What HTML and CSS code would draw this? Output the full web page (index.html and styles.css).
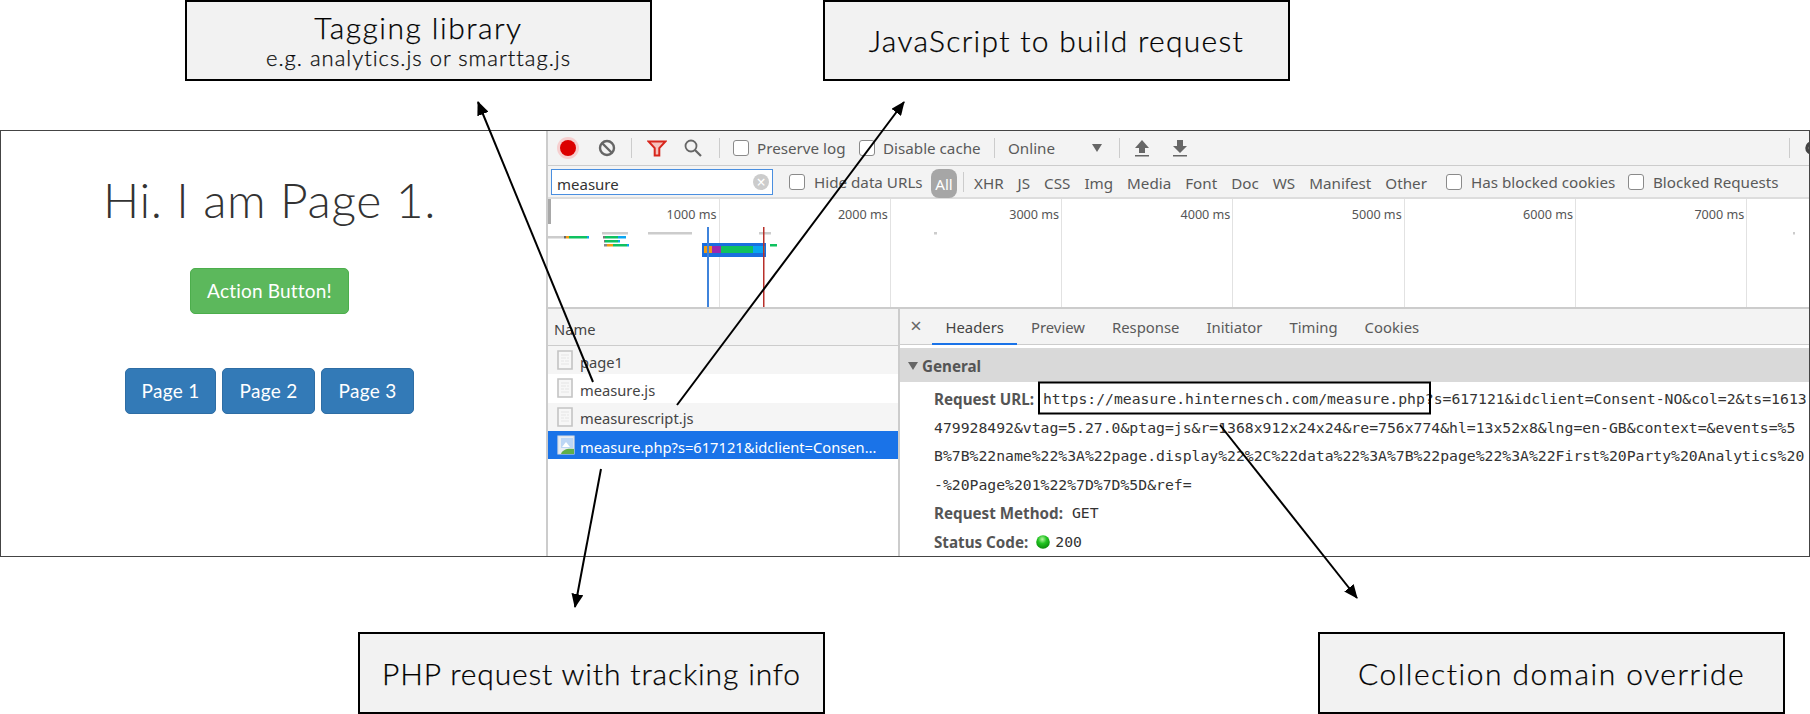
FILE: index.html
```html
<!DOCTYPE html>
<html lang="en">
<head>
<meta charset="utf-8">
<title>Network request diagram</title>
<link rel="stylesheet" href="styles.css">
</head>
<body>
<svg width="0" height="0" class="defs">
  <defs>
    <symbol id="doc" viewBox="0 0 16 20">
      <path d="M1 1h14v18H1z" fill="#f7f7f7" stroke="#c4c4c4" stroke-width="1.6"/>
      <path d="M4 5h8M4 8h5M10 8h2M4 11h3M8 11h4M4 14h8" stroke="#e6e6e6" stroke-width="1.2"/>
    </symbol>
    <marker id="head" markerUnits="userSpaceOnUse" markerWidth="14" markerHeight="12" refX="13" refY="6" orient="auto">
      <path d="M0 0L14 6L0 12Z" fill="#000"/>
    </marker>
    <radialGradient id="led" cx="45%" cy="30%" r="70%">
      <stop offset="0" stop-color="#b6f5a0"/>
      <stop offset=".45" stop-color="#22c422"/>
      <stop offset="1" stop-color="#0a8a0a"/>
    </radialGradient>
  </defs>
</svg>

<section class="labels labels-top">
  <div class="label">
    <div class="label-title">Tagging library</div>
    <div class="label-sub">e.g. analytics.js or smarttag.js</div>
  </div>
  <div class="label"><div class="label-title label-mid">JavaScript to build request</div></div>
</section>

<main class="frame">
  <section class="page">
    <h1 class="page-title">Hi. I am Page 1.</h1>
    <button class="btn btn-green">Action Button!</button>
    <nav class="page-nav">
      <button class="btn btn-blue">Page 1</button>
      <button class="btn btn-blue">Page 2</button>
      <button class="btn btn-blue">Page 3</button>
    </nav>
  </section>

  <section class="devtools">
    <div class="bar bar-main">
      <svg class="ic ic-record" width="24" height="24" viewBox="0 0 24 24"><circle cx="12" cy="12" r="11" fill="#f6cfcf"/><circle cx="12" cy="12" r="8" fill="#dc0000"/></svg>
      <svg class="ic ic-stop" width="18" height="18" viewBox="0 0 18 18"><circle cx="9" cy="9" r="7" fill="none" stroke="#666" stroke-width="2.4"/><path d="M4 4l10 10" stroke="#666" stroke-width="2.4"/></svg>
      <span class="sep sep-a"></span>
      <svg class="ic ic-filter" width="20" height="17" viewBox="0 0 20 17"><path d="M1.500 1.500h17l-6.200 6.600v7.400h-4.600v-7.400z" fill="#f5c2bd" stroke="#d8261c" stroke-width="2"/></svg>
      <svg class="ic ic-search" width="20" height="20" viewBox="0 0 20 20"><circle cx="8" cy="8" r="5.500" fill="none" stroke="#666" stroke-width="1.800"/><path d="M12 12l6 6" stroke="#666" stroke-width="2.200"/></svg>
      <span class="sep sep-b"></span>
      <span class="check check-a"></span><span class="txt txt-preserve">Preserve log</span>
      <span class="check check-b"></span><span class="txt txt-disable">Disable cache</span>
      <span class="sep sep-c"></span>
      <span class="txt txt-online">Online</span>
      <svg class="ic ic-caret" width="10" height="8" viewBox="0 0 10 8"><path d="M0 0h10L5 8z" fill="#666"/></svg>
      <span class="sep sep-d"></span>
      <svg class="ic ic-up" width="16" height="18" viewBox="0 0 16 18"><path d="M8 1l7 8h-4v5H5V9H1zM1 16h14v1.500H1z" fill="#666"/></svg>
      <svg class="ic ic-down" width="16" height="18" viewBox="0 0 16 18"><path d="M5 1h6v6h4l-7 7-7-7h4zM1 16h14v1.500H1z" fill="#666"/></svg>
      <span class="sep sep-e"></span>
      <svg class="ic ic-gear" width="14" height="16" viewBox="0 0 14 16"><circle cx="7" cy="8" r="5" fill="none" stroke="#444" stroke-width="3.500"/></svg>
    </div>

    <div class="bar bar-filter">
      <div class="search">
        <span class="search-text">measure</span>
        <span class="search-clear">×</span>
      </div>
      <span class="check check-c"></span><span class="txt txt-hide">Hide data URLs</span>
      <span class="pill">All</span>
      <span class="sep sep-f"></span>
      <div class="types">
        <span>XHR</span><span>JS</span><span>CSS</span><span>Img</span><span>Media</span><span>Font</span><span>Doc</span><span>WS</span><span>Manifest</span><span>Other</span>
      </div>
      <span class="check check-d"></span><span class="txt txt-cookies">Has blocked cookies</span>
      <span class="check check-e"></span><span class="txt">Blocked Requests</span>
    </div>

    <div class="overview">
      <div class="tick tick-first">1000 ms</div>
      <div class="tick">2000 ms</div>
      <div class="tick">3000 ms</div>
      <div class="tick">4000 ms</div>
      <div class="tick">5000 ms</div>
      <div class="tick">6000 ms</div>
      <div class="tick">7000 ms</div>
      <svg class="overview-bars" width="1261" height="108" viewBox="548 199 1261 108">
        <rect x="548" y="199" width="3" height="25" fill="#a8a8a8"/>
        <rect x="548" y="236" width="16" height="2.500" fill="#ccc"/>
        <rect x="564" y="236" width="2" height="2.500" fill="#666"/>
        <rect x="566" y="236" width="3" height="2.500" fill="#f39c12"/>
        <rect x="569" y="236" width="18" height="2.500" fill="#0fc15f"/>
        <rect x="587" y="236" width="2" height="2.500" fill="#0aa5f0"/>
        <rect x="602" y="232" width="26" height="2.500" fill="#ccc"/>
        <rect x="603" y="236" width="2" height="2.500" fill="#777"/>
        <rect x="605" y="236" width="13" height="2.500" fill="#0fc15f"/>
        <rect x="618" y="236" width="8" height="2.500" fill="#0aa5f0"/>
        <rect x="604" y="240" width="1" height="2.500" fill="#777"/>
        <rect x="605" y="240" width="13" height="2.500" fill="#0fc15f"/>
        <rect x="618" y="240" width="2" height="2.500" fill="#0aa5f0"/>
        <rect x="604" y="244" width="3" height="2.500" fill="#888"/>
        <rect x="607" y="244" width="6" height="2.500" fill="#f39c12"/>
        <rect x="613" y="244" width="14" height="2.500" fill="#0fc15f"/>
        <rect x="627" y="244" width="2" height="2.500" fill="#0aa5f0"/>
        <rect x="648" y="232" width="44" height="2.500" fill="#ccc"/>
        <rect x="759" y="232" width="12" height="2.500" fill="#ccc"/>
        <rect x="934" y="232" width="3" height="2.500" fill="#ccc"/>
        <rect x="1793" y="232" width="2" height="2.500" fill="#ccc"/>
        <rect x="770" y="244" width="7" height="2.500" fill="#0fc15f"/>
        <rect x="702" y="243" width="64" height="14" fill="#1a6fdf"/>
        <rect x="704" y="246" width="3" height="7" fill="#f39c12"/>
        <rect x="707" y="246" width="2" height="7" fill="#6b7d99"/>
        <rect x="709" y="246" width="3" height="7" fill="#f39c12"/>
        <rect x="712" y="246" width="9" height="7" fill="#9c27b0"/>
        <rect x="721" y="246" width="32" height="7" fill="#0fc15f"/>
        <rect x="753" y="246" width="12" height="7" fill="#0aa5f0"/>
        <rect x="707" y="227" width="2" height="80" fill="#3f83db"/>
        <rect x="763" y="227" width="1.500" height="80" fill="#b8302a"/>
      </svg>
    </div>

    <div class="split">
      <div class="names">
        <div class="names-head">Name</div>
        <div class="row row-alt"><svg class="file" width="16" height="20"><use href="#doc"/></svg><span class="row-name">page1</span></div>
        <div class="row"><svg class="file" width="16" height="20"><use href="#doc"/></svg><span class="row-name">measure.js</span></div>
        <div class="row row-alt"><svg class="file" width="16" height="20"><use href="#doc"/></svg><span class="row-name">measurescript.js</span></div>
        <div class="row row-sel">
          <svg class="file" width="18" height="20" viewBox="0 0 18 20"><path d="M1 1h16v18H1z" fill="#e8edf3" stroke="#d8dde3" stroke-width="1.200"/><path d="M4 3h12v10H4z" fill="#bcd6f5"/><path d="M5 12l4-5 4 5z" fill="#fff"/><path d="M4 19c1-4 6-6 13-5v5z" fill="#5fb04a"/></svg>
          <span class="row-name">measure.php?s=617121&amp;idclient=Consen…</span>
        </div>
      </div>

      <div class="detail">
        <div class="tabs">
          <span class="tab-close">×</span>
          <span class="tab tab-on">Headers</span>
          <span class="tab">Preview</span>
          <span class="tab">Response</span>
          <span class="tab">Initiator</span>
          <span class="tab">Timing</span>
          <span class="tab">Cookies</span>
        </div>
        <div class="general"><svg class="general-caret" width="10" height="8" viewBox="0 0 10 8"><path d="M0 0h10L5 8z" fill="#666"/></svg>General</div>
        <div class="kv">
          <div class="kv-line"><b class="key">Request URL:</b><span class="val">https://measure.hinternesch.com/measure.php?s=617121&amp;idclient=Consent-NO&amp;col=2&amp;ts=1613</span></div>
          <div class="kv-line val">479928492&amp;vtag=5.27.0&amp;ptag=js&amp;r=1368x912x24x24&amp;re=756x774&amp;hl=13x52x8&amp;lng=en-GB&amp;context=&amp;events=%5</div>
          <div class="kv-line val">B%7B%22name%22%3A%22page.display%22%2C%22data%22%3A%7B%22page%22%3A%22First%20Party%20Analytics%20</div>
          <div class="kv-line val">-%20Page%201%22%7D%7D%5D&amp;ref=</div>
          <div class="kv-line"><b class="key">Request Method:</b><span class="val">GET</span></div>
          <div class="kv-line"><b class="key">Status Code:</b><svg class="led" width="14" height="14" viewBox="0 0 14 14"><circle cx="7" cy="7" r="6.800" fill="url(#led)"/></svg><span class="val val-status">200</span></div>
        </div>
      </div>
    </div>
  </section>
</main>

<section class="labels labels-bottom">
  <div class="label"><div class="label-title label-tight">PHP request with tracking info</div></div>
  <div class="label"><div class="label-title">Collection domain override</div></div>
</section>

<svg class="annotations" width="1810" height="714" viewBox="0 0 1810 714">
  <rect x="1039" y="382.500" width="391" height="31" fill="none" stroke="#000" stroke-width="2"/>
  <line x1="593" y1="382" x2="478" y2="102" stroke="#000" stroke-width="2" marker-end="url(#head)"/>
  <line x1="677" y1="405" x2="904" y2="102" stroke="#000" stroke-width="2" marker-end="url(#head)"/>
  <line x1="601" y1="469" x2="575" y2="607" stroke="#000" stroke-width="2" marker-end="url(#head)"/>
  <line x1="1220" y1="425" x2="1357" y2="598" stroke="#000" stroke-width="2" marker-end="url(#head)"/>
</svg>
</body>
</html>
```
FILE: styles.css
```css
* { box-sizing: border-box; }
html, body { margin: 0; padding: 0; }
body {
  position: relative;
  width: 1810px;
  height: 714px;
  overflow: hidden;
  background: #fff;
  font-family: "Noto Sans", "Open Sans", sans-serif;
}
.defs { position: absolute; }
.annotations { position: absolute; left: 0; top: 0; pointer-events: none; }

/* callout labels */
.labels { display: flex; height: 81px; flex: none; }
.labels-top { padding-left: 185px; gap: 171px; }
.labels-bottom { margin-top: 75px; height: 82px; padding-left: 358px; gap: 493px; }
.label {
  width: 467px;
  border: 2px solid #000;
  background: #f2f2f2;
  display: flex;
  flex-direction: column;
  align-items: center;
  justify-content: center;
  font-family: "Lato", sans-serif;
  font-weight: 300;
  color: #000;
  -webkit-text-stroke: .25px #000;
}
.label-title { font-size: 30px; line-height: 35px; letter-spacing: 1.5px; }
.label-mid { letter-spacing: 1.3px; }
.label-tight { letter-spacing: .85px; }
.label-sub { font-size: 22px; line-height: 26px; letter-spacing: 1px; color: #111; }

/* frame */
.frame {
  margin-top: 49px;
  height: 427px;
  border: 1px solid #444;
  display: flex;
}

/* left page */
.page {
  width: 545px;
  padding-right: 8px;
  display: flex;
  flex-direction: column;
  align-items: center;
  font-family: "Lato", sans-serif;
}
.page-title {
  margin: 38px 0 0;
  font-size: 48px;
  line-height: 62px;
  font-weight: 300;
  letter-spacing: .65px;
  color: #333;
}
.btn {
  font: inherit;
  font-size: 19px;
  color: #fff;
  border-radius: 5px;
  padding: 0 0 2px;
  height: 46px;
}
.btn-green {
  margin-top: 37px;
  width: 159px;
  background: #5cb85c;
  border: 1px solid #4cae4c;
  letter-spacing: .2px;
}
.page-nav { margin-top: 54px; display: flex; gap: 6px; }
.btn-blue {
  width: 93px;
  background: #337ab7;
  border: 1px solid #2e6da4;
  letter-spacing: .3px;
}
.btn-blue:first-child { width: 91px; }

/* devtools */
.devtools {
  width: 1263px;
  border-left: 2px solid #ccc;
  display: flex;
  flex-direction: column;
  font-size: 15.200px;
  color: #5a5a5a;
  overflow: hidden;
}
.bar { display: flex; align-items: center; background: #f3f3f3; flex: none; }
.bar-main { height: 35px; border-bottom: 1px solid #ccc; }
.bar-filter { height: 33px; border-bottom: 2px solid #ddd; }
.txt { flex: none; white-space: nowrap; }
.ic { display: block; flex: none; }
.ic-record { margin-left: 8px; }
.ic-stop { margin-left: 18px; }
.sep { flex: none; width: 1px; height: 20px; background: #ccc; }
.sep-a { margin-left: 15px; }
.ic-filter { margin-left: 15px; }
.ic-search { margin-left: 16px; }
.sep-b { margin-left: 16px; }
.check {
  flex: none;
  width: 16px;
  height: 16px;
  border: 1px solid #8a8a8a;
  border-radius: 3px;
  background: #fff;
}
.check-a { margin-left: 13px; margin-right: 8px; }
.txt-preserve { width: 86px; margin-right: 16px; }
.check-b { margin-right: 8px; }
.txt-disable { width: 96px; }
.sep-c { margin-left: 15px; }
.txt-online { margin-left: 13px; width: 46px; }
.ic-caret { margin-left: 38px; }
.sep-d { margin-left: 17px; }
.ic-up { margin-left: 14px; }
.ic-down { margin-left: 22px; }
.sep-e { margin-left: auto; }
.ic-gear { margin-left: 15px; margin-right: -10px; }

.search {
  margin-left: 3px;
  width: 222px;
  height: 26px;
  border: 1.500px solid #4a8fe0;
  background: #fff;
  display: flex;
  align-items: center;
  justify-content: space-between;
  padding: 0 3px 0 5px;
}
.search-text { color: #333; font-size: 15px; padding-top: 5px; }
.search-clear {
  width: 16px;
  height: 16px;
  border-radius: 50%;
  background: #ccc;
  color: #fff;
  font-size: 16px;
  line-height: 16px;
  text-align: center;
}
.check-c { margin-left: 16px; margin-right: 9px; }
.txt-hide { width: 108px; }
.pill {
  flex: none;
  margin-left: 9px;
  width: 26px;
  height: 29px;
  margin-top: 3px;
  border-radius: 8px;
  background: #a6a6a6;
  color: #fff;
  text-align: center;
  line-height: 31px;
}
.sep-f { margin-left: 6px; }
.types { flex: none; width: 452px; margin-left: 10px; padding-top: 3px; display: flex; gap: 14px; white-space: nowrap; }
.check-d { margin-left: 20px; margin-right: 9px; }
.txt-cookies { width: 144px; }
.check-e { margin-left: 13px; margin-right: 9px; }

.overview {
  height: 108px;
  flex: none;
  display: flex;
  position: relative;
  background: #fff;
}
.tick {
  flex: none;
  width: 171.300px;
  border-right: 1.500px solid #e2e2e2;
  padding: 6px 2px 0 0;
  text-align: right;
  font-size: 12.600px;
  line-height: 20px;
  color: #555;
}
.tick-first { width: 171.500px; }
.overview-bars { position: absolute; left: 0; top: 0; }

.split {
  flex: 1;
  display: flex;
  border-top: 2px solid #ccc;
  min-height: 0;
}
.names {
  flex: none;
  width: 352px;
  border-right: 2px solid #ccc;
  color: #444;
  font-size: 14.700px;
}
.names-head {
  height: 37px;
  padding: 0 6px;
  line-height: 40px;
  background: #f3f3f3;
  border-bottom: 1px solid #ccc;
}
.row {
  height: 28.300px;
  display: flex;
  align-items: center;
  padding: 0 8px 0 9px;
  gap: 7px;
}
.row-name { padding-top: 3px; white-space: nowrap; min-width: 0; }
.row-alt { background: #f5f5f5; }
.row-sel { background: #1a73e8; color: #fff; gap: 5px; }
.file { flex: none; display: block; }

.detail { flex: 1; min-width: 0; }
.tabs {
  height: 36px;
  display: flex;
  background: #f3f3f3;
  border-bottom: 1px solid #ccc;
  align-items: stretch;
  font-size: 14.850px;
}
.tab-close {
  width: 32px;
  text-align: center;
  font-size: 20px;
  line-height: 34px;
  color: #666;
}
.tab { padding: 0 13.500px; line-height: 37px; height: 36px; }
.tab-on { border-bottom: 2px solid #1a73e8; color: #444; }
.general {
  margin-top: 3px;
  height: 34px;
  background: #d9d9d9;
  display: flex;
  align-items: center;
  padding: 2px 0 0 8px;
  gap: 4px;
  font-weight: 700;
  color: #555;
}
.kv { padding: 3px 0 0 34px; }
.kv-line {
  height: 28.500px;
  line-height: 28.500px;
  white-space: nowrap;
  display: flex;
  align-items: center;
}
.key { font-weight: 700; color: #555; }
.val {
  font-family: "DejaVu Sans Mono", "Liberation Mono", monospace;
  font-size: 14.750px;
  color: #333;
}
.key + .val { margin-left: 9px; }
.led { margin-left: 8px; flex: none; }
.val-status { margin-left: 5px; }
```
